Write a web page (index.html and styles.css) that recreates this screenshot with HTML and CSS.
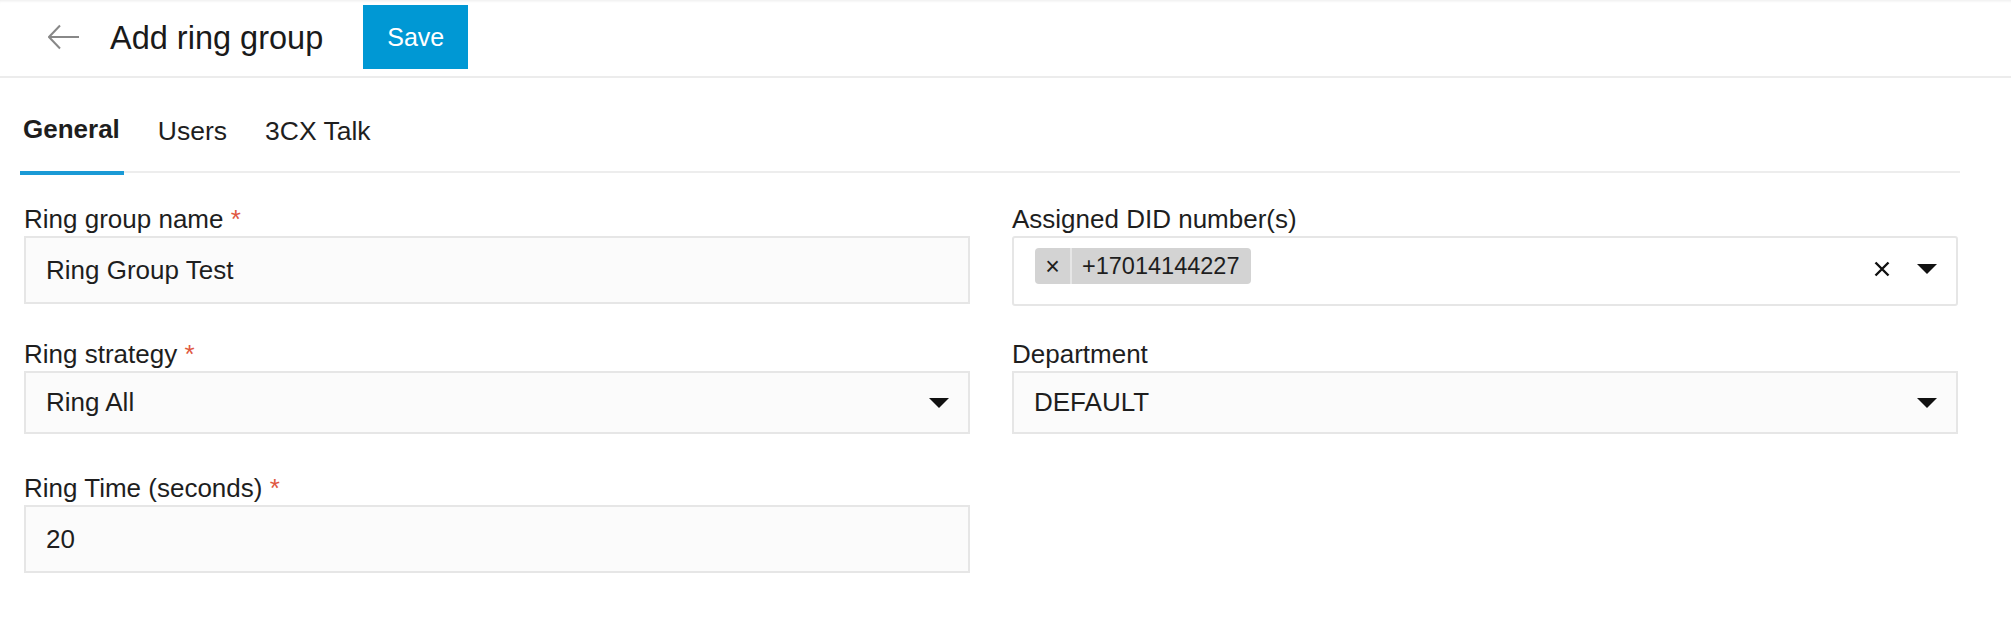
FILE: index.html
```html
<!DOCTYPE html>
<html lang="en">
<head>
    <meta charset="UTF-8">
    <meta name="viewport" content="width=device-width, initial-scale=1.0">
    <title>Add ring group</title>
    <link rel="stylesheet" href="styles.css">
</head>
<body>
    <header class="topbar">
        <button class="back" aria-label="Back">
            <svg width="32" height="26" viewBox="0 0 32 26">
                <path d="M1 13 H31 M12 1.5 L1 13 L12 24.5" fill="none" stroke="#888" stroke-width="2"/>
            </svg>
        </button>
        <h1 class="title">Add ring group</h1>
        <button class="save">Save</button>
    </header>

    <div class="page">
        <nav class="tabs">
            <a class="tab active">General</a>
            <a class="tab">Users</a>
            <a class="tab">3CX Talk</a>
        </nav>

        <form class="form">
            <div class="field">
                <label>Ring group name <span class="req">*</span></label>
                <div class="control">Ring Group Test</div>
            </div>
            <div class="field">
                <label>Assigned DID number(s)</label>
                <div class="multi">
                    <span class="chip">
                        <span class="chip-x">×</span>
                        <span class="chip-text">+17014144227</span>
                    </span>
                    <span class="multi-tools">
                        <svg class="clear" width="16" height="16" viewBox="0 0 16 16">
                            <path d="M1.5 1.5 L14.5 14.5 M14.5 1.5 L1.5 14.5" stroke="#111" stroke-width="2.4"/>
                        </svg>
                        <span class="caret"></span>
                    </span>
                </div>
            </div>
            <div class="field">
                <label>Ring strategy <span class="req">*</span></label>
                <div class="control select">Ring All <span class="caret"></span></div>
            </div>
            <div class="field">
                <label>Department</label>
                <div class="control select">DEFAULT <span class="caret"></span></div>
            </div>
            <div class="field">
                <label>Ring Time (seconds) <span class="req">*</span></label>
                <div class="control">20</div>
            </div>
        </form>
    </div>
</body>
</html>
```

FILE: styles.css
```css
body {
    font-family: "Liberation Sans", Arial, sans-serif;
    color: #1e1e1e;
    background: #fff;
    margin: 0;
    padding: 0;
}

.topbar {
    display: flex;
    align-items: center;
    height: 76px;
    padding-left: 48px;
    border-bottom: 2px solid #ececec;
    box-shadow: inset 0 3px 3px -2px rgba(0, 0, 0, 0.08);
}

.back {
    display: flex;
    padding: 0;
    border: none;
    background: none;
    margin-right: 30px;
    margin-top: -2px;
}

.title {
    font-size: 32.5px;
    font-weight: normal;
    margin: 0 40px 0 0;
    color: #1a1a1a;
}

.save {
    height: 64px;
    width: 105px;
    padding: 0;
    margin-top: -2px;
    font-family: inherit;
    font-size: 25px;
    color: #fff;
    background: #0098d4;
    border: none;
}

.page {
    padding-left: 20px;
    width: 1940px;
}

.tabs {
    display: flex;
    gap: 30px;
    height: 93px;
    border-bottom: 2px solid #ededed;
}

.tab {
    font-size: 26.5px;
    line-height: 30px;
    padding: 38px 4px 0;
    color: #1e1e1e;
}

.tab.active {
    font-size: 26px;
    font-weight: bold;
    padding: 36px 4px 0 3px;
    border-bottom: 4px solid #1a9ad6;
    height: 57px;
}

.form {
    display: grid;
    grid-template-columns: 946px 946px;
    grid-template-rows: 135px 134px auto;
    column-gap: 42px;
    padding: 30px 2px 0 4px;
}

.field label {
    display: block;
    font-size: 26px;
    line-height: 32px;
    margin-bottom: 1px;
}

.req {
    color: #e0583f;
}

.control {
    display: flex;
    align-items: center;
    height: 64px;
    padding: 0 20px;
    font-size: 26px;
    background: #fbfbfb;
    border: 2px solid #e6e6e6;
}

.select {
    height: 59px;
    padding-right: 19px;
    justify-content: space-between;
}

.caret {
    width: 0;
    height: 0;
    border-left: 10px solid transparent;
    border-right: 10px solid transparent;
    border-top: 10px solid #111;
}

.multi {
    display: flex;
    align-items: flex-start;
    justify-content: space-between;
    height: 48px;
    padding: 10px 19px 8px 21px;
    border: 2px solid #e6e6e6;
    border-radius: 3px;
    background: #fff;
}

.chip {
    display: flex;
    align-items: center;
    height: 36px;
    background: #d3d3d3;
    border-radius: 4px;
    font-size: 24px;
}

.chip-x {
    width: 35px;
    text-align: center;
    font-size: 25px;
    border-right: 2px solid #e6e6e6;
    line-height: 36px;
}

.chip-text {
    padding: 0 11px 0 10px;
    font-size: 23.5px;
}

.multi-tools {
    display: flex;
    align-items: center;
    gap: 27px;
    height: 36px;
    padding-top: 3px;
}
```
